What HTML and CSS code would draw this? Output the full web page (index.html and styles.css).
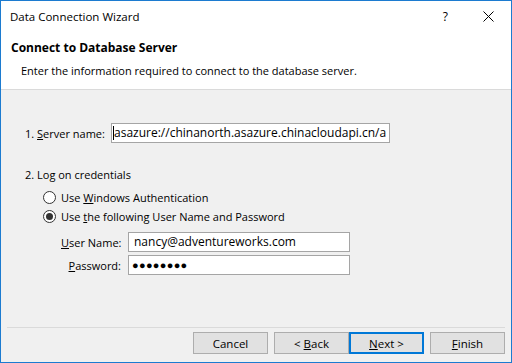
FILE: index.html
```html
<!DOCTYPE html>
<html>
<head>
<meta charset="utf-8">
<link rel="stylesheet" href="styles.css">
</head>
<body>
<div class="window">
  <div class="titlebar">
    <span class="title">Data Connection Wizard</span>
    <span class="help">?</span>
    <svg class="close" width="11" height="11" viewBox="0 0 11 11"><path d="M0.5 0.5 L10.5 10.5 M10.5 0.5 L0.5 10.5" stroke="#000" stroke-width="1" fill="none"/></svg>
  </div>
  <div class="header">
    <div class="h-title">Connect to Database Server</div>
    <div class="h-sub">Enter the information required to connect to the database server.</div>
  </div>
  <div class="body">
    <div class="server-row">
      <span class="server-label">1. <u>S</u>erver name:</span>
      <div class="input server-input"><span class="caret"></span><span>asazure://chinanorth.asazure.chinacloudapi.cn/a</span></div>
    </div>
    <div class="section-label">2. Log on credentials</div>
    <div class="radio-row"><span class="radio"></span><span>Use <u>W</u>indows Authentication</span></div>
    <div class="radio-row"><span class="radio checked"></span><span>Use <u>t</u>he following User Name and Password</span></div>
    <div class="cred-grid">
      <span class="cred-label"><u>U</u>ser Name:</span>
      <div class="input cred-input">nancy@adventureworks.com</div>
      <span class="cred-label"><u>P</u>assword:</span>
      <div class="input cred-input pw">●●●●●●●●</div>
    </div>
  </div>
  <div class="footer">
    <div class="btn"><span>Cancel</span></div>
    <div class="btn"><span>&lt; <u>B</u>ack</span></div>
    <div class="btn default"><span><u>N</u>ext &gt;</span></div>
    <div class="btn"><span><u>F</u>inish</span></div>
  </div>
</div>
</body>
</html>
```
FILE: styles.css
```css
html, body {
  margin: 0;
  padding: 0;
}
body {
  font-family: "Open Sans", "Noto Sans", sans-serif;
  font-size: 11px;
  color: #000;
}
.window {
  width: 512px;
  height: 363px;
  box-sizing: border-box;
  border: 1px solid #1c7bd0;
  display: flex;
  flex-direction: column;
  background: #f0f0f0;
}
.titlebar {
  height: 31px;
  background: #fff;
  display: flex;
  align-items: center;
  padding-left: 9px;
  flex: none;
}
.title {
  font-size: 11.5px;
  flex: 1;
}
.help {
  font-size: 12px;
  margin-right: 35px;
}
.close {
  margin-right: 17px;
}
.header {
  background: #fff;
  border-bottom: 1px solid #dadada;
  padding: 8px 0 0 10px;
  box-sizing: border-box;
  height: 58px;
  flex: none;
}
.h-title {
  font-weight: bold;
  font-size: 12px;
  line-height: 16px;
}
.h-sub {
  line-height: 16px;
  margin-top: 7px;
  padding-left: 10px;
}
.body {
  flex: 1;
  padding: 33px 0 0 24px;
}
.server-row {
  display: flex;
  align-items: center;
}
.server-label {
  width: 86px;
  white-space: nowrap;
}
.input {
  height: 20px;
  box-sizing: border-box;
  border: 1px solid #a5a5a5;
  background: #fff;
  line-height: 18px;
  white-space: nowrap;
  overflow: hidden;
  font-size: 12px;
}
.server-input {
  width: 279px;
  padding-left: 1px;
  display: flex;
  align-items: center;
}
.caret {
  width: 1px;
  height: 14px;
  background: #000;
  flex: none;
}
.section-label {
  margin-top: 24px;
  line-height: 16px;
}
.radio-row {
  display: flex;
  align-items: center;
  height: 19px;
  margin-left: 18px;
  white-space: nowrap;
}
.section-label + .radio-row {
  margin-top: 5px;
}
.radio {
  width: 13px;
  height: 13px;
  box-sizing: border-box;
  border: 1px solid #333;
  border-radius: 50%;
  background: #fff;
  margin-right: 5px;
  display: flex;
  align-items: center;
  justify-content: center;
  flex: none;
}
.radio.checked::after {
  content: "";
  width: 7px;
  height: 7px;
  border-radius: 50%;
  background: #333;
}
.cred-grid {
  display: grid;
  grid-template-columns: 60px 222px;
  column-gap: 7px;
  row-gap: 3px;
  margin: 6px 0 0 36px;
  align-items: center;
}
.cred-label {
  text-align: right;
  white-space: nowrap;
}
.cred-input {
  padding-left: 5px;
}
.pw {
  font-size: 11px;
  letter-spacing: 0.3px;
  padding-left: 3px;
}
.footer {
  flex: none;
  margin: 0 6px 0 6px;
  border-top: 1px solid #dadada;
  padding: 4px 0 8px 0;
  display: flex;
  justify-content: flex-end;
}
.btn {
  width: 75px;
  height: 22px;
  box-sizing: border-box;
  border: 1px solid #adadad;
  background: #e1e1e1;
  display: flex;
  align-items: center;
  justify-content: center;
  margin-left: 6px;
  font-size: 11.5px;
  white-space: nowrap;
}
.btn.default {
  border: 2px solid #0078d7;
  margin-left: 0;
}
```
